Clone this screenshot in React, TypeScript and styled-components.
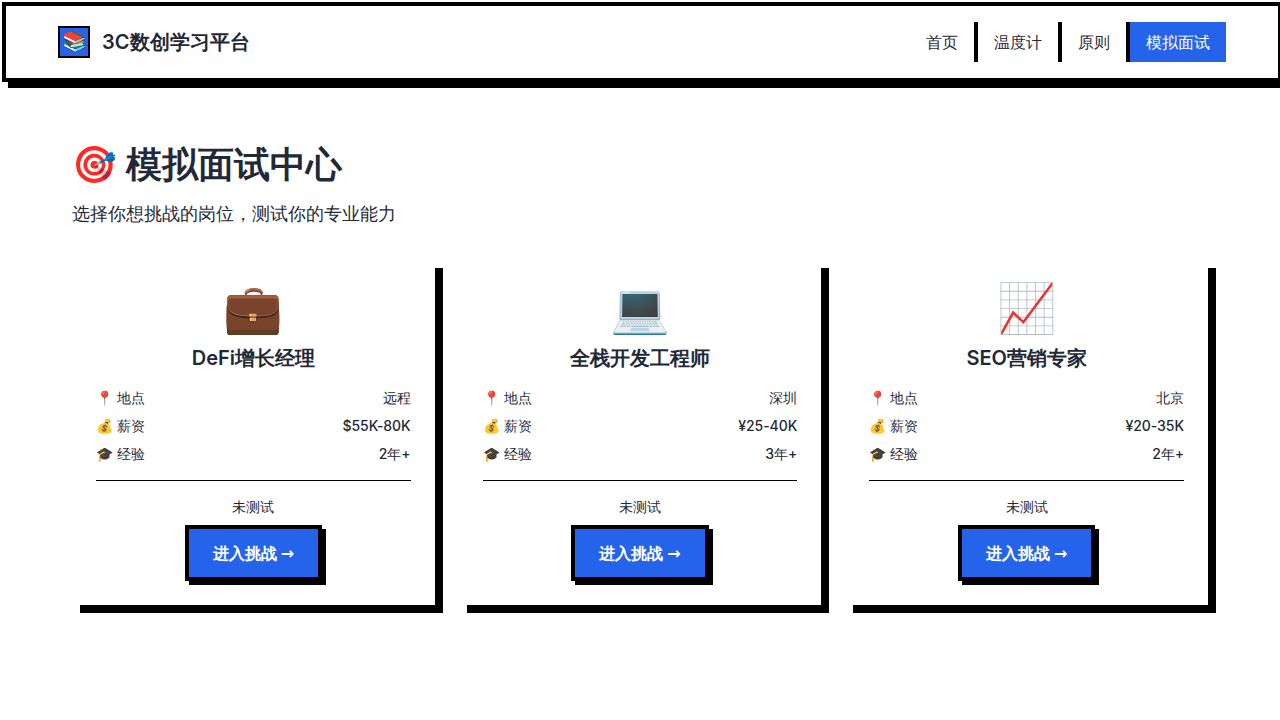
import React from "react";
import styled, { createGlobalStyle } from "styled-components";

const GlobalStyle = createGlobalStyle`
  *, *::before, *::after { box-sizing: border-box; }
  body {
    margin: 0;
    min-height: 100vh;
    background: #fff;
    color: #1f2937;
    font-family: Inter, sans-serif;
    line-height: 1.5;
    overflow-x: hidden;
  }
  h1, h2, h3, p { margin: 0; }
`;

const Page = styled.div`
  min-height: 100vh;
  display: flow-root;
`;

const Header = styled.header`
  margin: 2px -2px 0 2px;
  height: 80px;
  border: 4px solid #000;
  box-shadow: 6px 6px 0 #000;
  padding: 0 52px;
  display: flex;
  align-items: center;
  justify-content: space-between;
`;

const Brand = styled.div`
  display: flex;
  align-items: center;
  gap: 12px;
  font-size: 20px;
  font-weight: 600;
  letter-spacing: 0.1px;
`;

const Logo = styled.div`
  width: 32px;
  height: 32px;
  border: 2px solid #000;
  background: #2563eb;
  display: flex;
  align-items: center;
  justify-content: center;
  font-size: 20px;
  line-height: 26px;
  padding-bottom: 2px;
  letter-spacing: 0;
`;

const Nav = styled.nav`
  display: flex;
`;

const NavLink = styled.a<{ $active?: boolean }>`
  padding: 8px 16px;
  height: 40px;
  border-right: ${(p) => (p.$active ? "none" : "4px solid #000")};
  background: ${(p) => (p.$active ? "#2563eb" : "transparent")};
  color: ${(p) => (p.$active ? "#fff" : "inherit")};
`;

const Main = styled.main`
  padding: 56px 72px 0;
`;

const Title = styled.h1`
  font-size: 36px;
  line-height: 52px;
  font-weight: 600;
`;

const Subtitle = styled.p`
  margin-top: 10px;
  font-size: 18px;
  line-height: 28px;
`;

const Grid = styled.div`
  margin-top: 32px;
  display: grid;
  grid-template-columns: repeat(3, 1fr);
  gap: 24px;
`;

const Card = styled.article`
  height: 345px;
  padding: 24px;
  background: #fff;
  box-shadow: 8px 8px 0 #000;
  display: flex;
  flex-direction: column;
  align-items: center;
`;

const Emoji = styled.div`
  font-size: 48px;
  line-height: 48px;
`;

const CardTitle = styled.h3`
  margin-top: 12px;
  font-size: 20px;
  line-height: 28px;
  font-weight: 600;
`;

const Facts = styled.div`
  width: 100%;
  margin-top: 16px;
  display: grid;
  gap: 8px;
  padding-bottom: 16px;
  border-bottom: 1px solid #000;
  font-size: 14px;
  line-height: 20px;
`;

const Fact = styled.div`
  display: flex;
  justify-content: space-between;
`;

const Value = styled.span`
  font-weight: 500;
  letter-spacing: -0.05px;
`;

const Status = styled.p`
  margin-top: 16px;
  font-size: 14px;
  line-height: 20px;
`;

const Challenge = styled.button`
  margin-top: 8px;
  width: 137.4px;
  height: 56px;
  padding: 0;
  border: 4px solid #000;
  box-shadow: 4px 4px 0 #000;
  background: #2563eb;
  color: #fff;
  font: 600 16px/24px Inter, sans-serif;
  white-space: nowrap;
`;

const Arrow = styled.span`
  font-family: "DejaVu Sans", sans-serif;
  line-height: 1;
`;

const jobs = [
  { icon: "💼", title: "DeFi增长经理", place: "远程", salary: "$55K-80K", years: "2年+" },
  { icon: "💻", title: "全栈开发工程师", place: "深圳", salary: "¥25-40K", years: "3年+" },
  { icon: "📈", title: "SEO营销专家", place: "北京", salary: "¥20-35K", years: "2年+" },
];

export default function App() {
  return (
    <Page>
      <GlobalStyle />
      <Header>
        <Brand><Logo>📚</Logo><span>3C数创学习平台</span></Brand>
        <Nav>
          <NavLink>首页</NavLink>
          <NavLink>温度计</NavLink>
          <NavLink>原则</NavLink>
          <NavLink $active>模拟面试</NavLink>
        </Nav>
      </Header>
      <Main>
        <Title>🎯 模拟面试中心</Title>
        <Subtitle>选择你想挑战的岗位，测试你的专业能力</Subtitle>
        <Grid>
          {jobs.map((j) => (
            <Card key={j.title}>
              <Emoji>{j.icon}</Emoji>
              <CardTitle>{j.title}</CardTitle>
              <Facts>
                <Fact><span>📍 地点</span><Value>{j.place}</Value></Fact>
                <Fact><span>💰 薪资</span><Value>{j.salary}</Value></Fact>
                <Fact><span>🎓 经验</span><Value>{j.years}</Value></Fact>
              </Facts>
              <Status>未测试</Status>
              <Challenge>进入挑战 <Arrow>→</Arrow></Challenge>
            </Card>
          ))}
        </Grid>
      </Main>
    </Page>
  );
}
